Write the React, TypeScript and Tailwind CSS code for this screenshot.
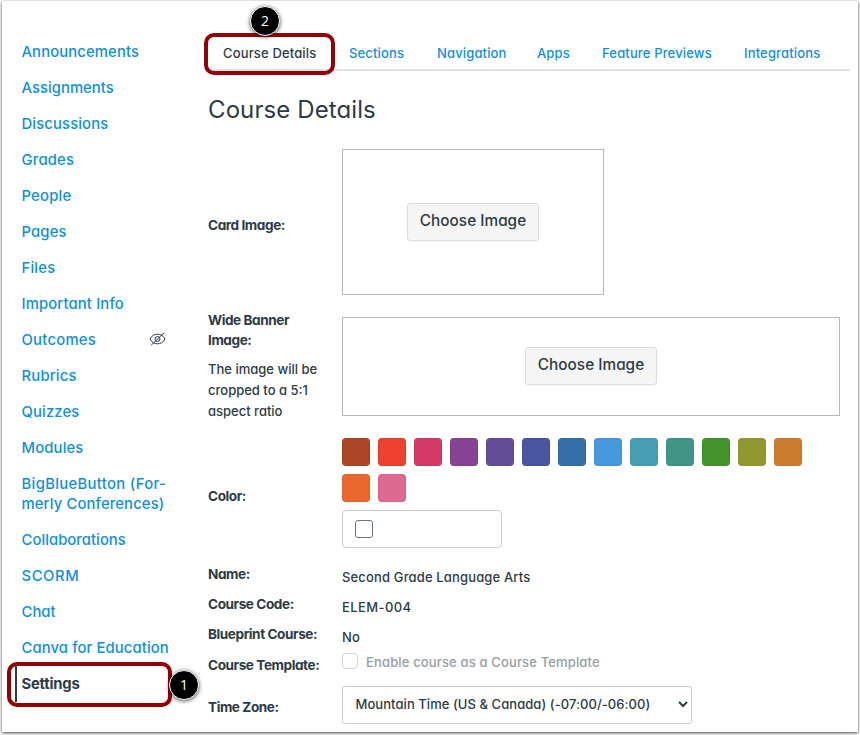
import { ReactNode } from 'react';

const links: [string, string][] = [
  ['Announcements', 'tracking-[0.13px]'],
  ['Assignments', 'tracking-[0.04px]'],
  ['Discussions', 'tracking-[0.14px]'],
  ['Grades', 'tracking-[0.2px]'],
  ['People', 'tracking-[0.2px]'],
  ['Pages', 'tracking-[0.15px]'],
  ['Files', 'tracking-[0.2px]'],
  ['Important Info', 'tracking-[0.15px]'],
  ['Outcomes', 'tracking-[0.26px]'],
  ['Rubrics', 'tracking-[0.2px]'],
  ['Quizzes', 'tracking-[0.14px]'],
  ['Modules', 'tracking-[0.16px]'],
  ['BigBlueButton (For-|merly Conferences)', 'tracking-[0.14px]'],
  ['Collaborations', 'tracking-[0.05px]'],
  ['SCORM', 'tracking-[0.6px]'],
  ['Chat', 'tracking-[0.05px]'],
  ['Canva for Education', 'tracking-[0.12px]'],
];

const tabs: [string, string][] = [
  ['Sections', 'w-[88px]'],
  ['Navigation', 'w-[100px]'],
  ['Apps', 'w-[65px]'],
  ['Feature Previews', 'w-[142px]'],
  ['Integrations', 'w-[77px]'],
];

const swatches = [
  'bg-[#ad4526]', 'bg-[#ef422e]', 'bg-[#d53965]', 'bg-[#864393]', 'bg-[#634d98]',
  'bg-[#4955a0]', 'bg-[#3570a8]', 'bg-[#4599dc]', 'bg-[#489fb5]', 'bg-[#419486]',
  'bg-[#43932b]', 'bg-[#91982f]', 'bg-[#cb7d2d]', 'bg-[#ea6830]', 'bg-[#df6a91]',
];

function HiddenEye() {
  return (
    <svg width="17" height="16" viewBox="0 0 17 16" fill="none" stroke="#2d3b45" strokeWidth="1">
      <path d="M1 8C2.7 4.6 5.5 3.2 8.5 3.2S14.3 4.6 16 8C14.3 11.4 11.5 12.8 8.5 12.8S2.7 11.4 1 8Z" />
      <circle cx="8.5" cy="8" r="2.5" />
      <path d="M2.2 14.2 15.3 1.6" />
    </svg>
  );
}

function Badge({ n, className }: { n: number; className: string }) {
  return (
    <div
      className={`absolute flex h-[30px] w-[30px] items-center justify-center rounded-full border border-white bg-black font-['Open_Sans',sans-serif] text-[14px] font-normal tracking-normal text-white shadow-[0_1px_4px_rgba(0,0,0,0.7)] ${className}`}
    >
      {n}
    </div>
  );
}

function ChooseButton({ className }: { className: string }) {
  return (
    <button
      className={`h-[38px] w-[132px] rounded-[3px] border border-[#d9dcde] bg-[#f5f5f5] pb-px text-[15.3px] font-[450] tracking-[0.04px] whitespace-nowrap ${className}`}
    >
      Choose Image
    </button>
  );
}

function Label({ children, className = '' }: { children: ReactNode; className?: string }) {
  return (
    <div className={`w-[134px] shrink-0 text-[13.6px] leading-5 font-bold tracking-[-0.43px] ${className}`}>
      {children}
    </div>
  );
}

export default function App() {
  return (
    <div className="h-[735px] w-[860px] overflow-hidden bg-white pt-px pl-[2px] font-[Inter,sans-serif] font-[450] text-[#2d3b45] [font-feature-settings:'cv11']">
      <div className="flex h-[731px] w-[856px] bg-white shadow-[0_1px_3px_rgba(0,0,0,0.75)]">
        <nav className="w-[206px] shrink-0 pt-[33px] pl-[19.5px] text-[14.8px] text-[#0e90e0]">
          {links.map(([name, track]) => (
            <a key={name} className={`flex items-center py-2 leading-5 whitespace-nowrap ${track}`}>
              <span>
                {name.split('|').map((line) => (
                  <span key={line} className={line.startsWith('Big') ? 'block tracking-[0.34px]' : 'block'}>{line}</span>
                ))}
              </span>
              {name === 'Outcomes' && (
                <span className="-mt-[2px] mr-[42px] ml-auto"><HiddenEye /></span>
              )}
            </a>
          ))}
          <a className="relative -ml-[6.5px] block h-9 border-l-2 border-[#2d3b45] py-2 pl-[4.5px] leading-5 font-bold tracking-[-0.2px] text-[#2d3b45]">
            Settings
            <div className="absolute -top-[4px] -left-[10px] h-[45px] w-[165px] rounded-[10px] border-4 border-[#930006]" />
            <Badge n={1} className="top-[4px] left-[152px]" />
          </a>
        </nav>

        <main className="w-[642px] pt-8">
          <div className="relative flex h-[38px] border-b-2 border-[#dfe2e5] pt-[8.5px] text-[13px] leading-[22px] tracking-[0.15px] whitespace-nowrap text-[#0e90e0]">
            <a className="w-[141px] pl-[15px] text-[#2d3b45]">Course Details</a>
            {tabs.map(([name, width]) => (
              <a key={name} className={width}>{name}</a>
            ))}
            <div className="absolute top-0 -left-[4px] h-[42px] w-[131px] rounded-[10px] border-4 border-[#930006]" />
            <Badge n={2} className="-top-[27px] left-[42px]" />
          </div>

          <h1 className="mt-[20.5px] h-[35.5px] text-[24px] leading-9 font-[430] tracking-[0.1px]">Course Details</h1>

          <section className="mt-[22px] flex h-[146px]">
            <Label className="pt-[66px]">Card Image:</Label>
            <div className="flex w-[262px] items-center justify-center border border-[#b4bac0]">
              <ChooseButton className="" />
            </div>
          </section>

          <section className="mt-[15px] flex h-[111px]">
            <div className="w-[134px]">
              <Label>Wide Banner<br />Image:</Label>
              <p className="mt-[9px] text-[13px] leading-[21px] whitespace-nowrap">
                The image will be<br />cropped to a 5:1<br />aspect ratio
              </p>
            </div>
            <div className="mt-[7px] flex h-[99px] w-[498px] items-center justify-center border border-[#b4bac0]">
              <ChooseButton className="mb-px" />
            </div>
          </section>

          <section className="mt-[17px] flex h-[110px]">
            <Label className="pt-[48px]">Color:</Label>
            <div>
              <div className="flex w-[480px] flex-wrap gap-2">
                {swatches.map((color) => (
                  <div key={color} className={`h-7 w-7 rounded-[4px] border border-black/5 ${color}`} />
                ))}
              </div>
              <div className="mt-2 flex h-[38px] w-[160px] items-center rounded-[4px] border border-[#c7cdd1] pl-3">
                <span className="h-[18px] w-[18px] rounded-[3px] border border-[#6b7780]" />
              </div>
            </div>
          </section>

          <section className="mt-[16px] text-[13px] leading-5 tracking-[0.15px]">
            <div className="flex h-[30px]">
              <Label>Name:</Label>
              <span className="pt-[3px]">Second Grade Language Arts</span>
            </div>
            <div className="flex h-[30px]">
              <Label>Course Code:</Label>
              <span className="pt-[3px] tracking-[0.4px]">ELEM-004</span>
            </div>
            <div className="flex h-[30px]">
              <Label>Blueprint Course:</Label>
              <span className="pt-[3px]">No</span>
            </div>
            <div className="flex h-[32px]">
              <Label className="pt-px">Course Template:</Label>
              <span className="-mt-px h-4 w-4 rounded-[4px] border border-[#cfd5d9]" />
              <span className="-mt-[2px] pl-2 text-[#969da2]">Enable course as a Course Template</span>
            </div>
            <div className="flex h-[38px]">
              <Label className="pt-[11px]">Time Zone:</Label>
              <div className="flex w-[350px] items-center rounded-[3px] border border-[#c7cdd1] pr-[3px] pb-[2px] pl-[12.5px]">
                <span className="tracking-[0.06px] whitespace-nowrap">Mountain Time (US &amp; Canada) (-07:00/-06:00)</span>
                <svg className="ml-auto" width="10" height="8" viewBox="0 0 10 8" fill="none" stroke="#2d3b45" strokeWidth="2">
                  <path d="M1 2 5 6 9 2" />
                </svg>
              </div>
            </div>
          </section>
        </main>
      </div>
    </div>
  );
}
